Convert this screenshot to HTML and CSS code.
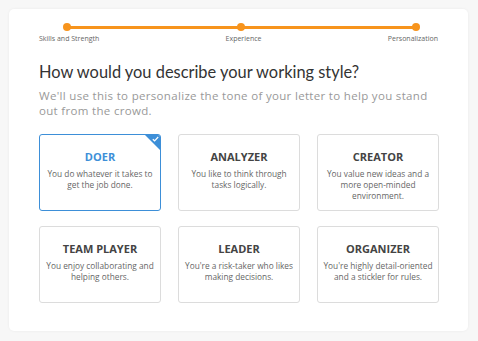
FILE: index.html
```html
<!DOCTYPE html>
<html>
<head>
<meta charset="utf-8">
<link rel="stylesheet" href="styles.css">
</head>
<body>
<div class="panel">
  <div class="steps">
    <div class="step"><span class="dot"></span><span class="step-label">Skills and Strength</span></div>
    <div class="step"><span class="dot"></span><span class="step-label">Experience</span></div>
    <div class="step"><span class="dot"></span><span class="step-label">Personalization</span></div>
  </div>
  <h1 class="title">How would you describe your working style?</h1>
  <p class="subtitle">We'll use this to personalize the tone of your letter to help you stand out from the crowd.</p>
  <div class="grid">
    <div class="option selected">
      <span class="check"><svg width="7" height="6" viewBox="0 0 7 6"><path d="M0.8 3.2 L2.6 4.8 L6.2 1" fill="none" stroke="#fff" stroke-width="1.2"/></svg></span>
      <div class="opt-title">DOER</div>
      <div class="opt-desc">You do whatever it takes to get the job done.</div>
    </div>
    <div class="option">
      <div class="opt-title">ANALYZER</div>
      <div class="opt-desc">You like to think through tasks logically.</div>
    </div>
    <div class="option">
      <div class="opt-title">CREATOR</div>
      <div class="opt-desc">You value new ideas and a more open-minded environment.</div>
    </div>
    <div class="option">
      <div class="opt-title">TEAM PLAYER</div>
      <div class="opt-desc">You enjoy collaborating and helping others.</div>
    </div>
    <div class="option">
      <div class="opt-title">LEADER</div>
      <div class="opt-desc">You're a risk-taker who likes making decisions.</div>
    </div>
    <div class="option">
      <div class="opt-title">ORGANIZER</div>
      <div class="opt-desc">You're highly detail-oriented and a stickler for rules.</div>
    </div>
  </div>
</div>
</body>
</html>
```
FILE: styles.css
```css
* { box-sizing: border-box; }
html, body { margin: 0; padding: 0; }
body {
  background: #f7f7f7;
  padding: 9px 10px 10px 9px;
  font-family: "Open Sans", sans-serif;
  width: 478px;
  height: 341px;
  overflow: hidden;
}
.panel {
  background: #fff;
  border-radius: 5px;
  box-shadow: 0 0 3px rgba(0,0,0,0.06);
  height: 322px;
  padding: 14px 30px 0 30px;
}
.steps {
  position: relative;
  display: flex;
  justify-content: space-between;
}
.steps::before {
  content: "";
  position: absolute;
  left: 27px;
  right: 22px;
  top: 2.5px;
  height: 3px;
  background: #f7941d;
}
.step {
  display: flex;
  flex-direction: column;
  align-items: center;
  position: relative;
}
.dot {
  width: 8px;
  height: 8px;
  border-radius: 50%;
  background: #f7941d;
  margin-left: -5px;
}
.step:last-child .dot { margin-left: 6px; }
.step-label {
  font-size: 7px;
  color: #666;
  margin-top: 3px;
  line-height: 10px;
}
.title {
  font-family: "Lato", sans-serif;
  font-weight: 400;
  font-size: 16.4px;
  color: #333;
  margin: 17px 0 0 0;
  line-height: 22px;
}
.subtitle {
  font-family: "Open Sans", sans-serif;
  font-size: 11.5px;
  letter-spacing: 0.32px;
  color: #999;
  margin: 5px 0 0 0;
  line-height: 15px;
}
.grid {
  display: grid;
  grid-template-columns: repeat(3, 122px);
  column-gap: 17px;
  row-gap: 15px;
  margin-top: 16px;
}
.option {
  position: relative;
  height: 77px;
  border: 1px solid #dcdcdc;
  border-radius: 3px;
  text-align: center;
  padding: 14px 2px 0 2px;
  overflow: hidden;
}
.option.selected {
  border: 1.5px solid #3d8fd8;
}
.check {
  position: absolute;
  top: 0;
  right: 0;
  width: 0;
  height: 0;
  border-top: 15px solid #3d8fd8;
  border-left: 15px solid transparent;
}
.check svg {
  position: absolute;
  top: -14px;
  right: 1px;
}
.opt-title {
  font-weight: 700;
  font-size: 11px;
  color: #444;
  line-height: 15px;
}
.selected .opt-title { color: #3d8fd8; }
.opt-desc {
  font-size: 8.3px;
  color: #666;
  line-height: 11px;
  margin-top: 4px;
}
```
